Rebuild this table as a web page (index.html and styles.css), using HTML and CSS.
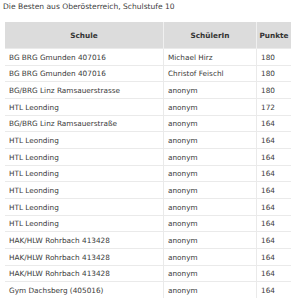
FILE: index.html
```html
<!DOCTYPE html>
<html lang="de">
<head>
<meta charset="utf-8">
<title>Die Besten</title>
<link rel="stylesheet" href="styles.css">
</head>
<body>
<p class="title">Die Besten aus Oberösterreich, Schulstufe 10</p>
<table class="ranking">
<thead>
<tr><th class="c-school">Schule</th><th class="c-name">SchülerIn</th><th class="c-pts">Punkte</th></tr>
</thead>
<tbody>
<tr><td>BG BRG Gmunden 407016</td><td>Michael Hirz</td><td>180</td></tr>
<tr><td>BG BRG Gmunden 407016</td><td>Christof Feischl</td><td>180</td></tr>
<tr><td>BG/BRG Linz Ramsauerstrasse</td><td>anonym</td><td>180</td></tr>
<tr><td>HTL Leonding</td><td>anonym</td><td>172</td></tr>
<tr><td>BG/BRG Linz Ramsauerstraße</td><td>anonym</td><td>164</td></tr>
<tr><td>HTL Leonding</td><td>anonym</td><td>164</td></tr>
<tr><td>HTL Leonding</td><td>anonym</td><td>164</td></tr>
<tr><td>HTL Leonding</td><td>anonym</td><td>164</td></tr>
<tr><td>HTL Leonding</td><td>anonym</td><td>164</td></tr>
<tr><td>HTL Leonding</td><td>anonym</td><td>164</td></tr>
<tr><td>HTL Leonding</td><td>anonym</td><td>164</td></tr>
<tr><td>HAK/HLW Rohrbach 413428</td><td>anonym</td><td>164</td></tr>
<tr><td>HAK/HLW Rohrbach 413428</td><td>anonym</td><td>164</td></tr>
<tr><td>HAK/HLW Rohrbach 413428</td><td>anonym</td><td>164</td></tr>
<tr><td>Gym Dachsberg (405016)</td><td>anonym</td><td>164</td></tr>
</tbody>
</table>
</body>
</html>
```
FILE: styles.css
```css
html, body {
  margin: 0;
  background: #fff;
}
body {
  padding: 2px 0 0 3px;
  font-family: "DejaVu Sans", Verdana, sans-serif;
  font-size: 7.3px;
  color: #3a3a3a;
}
.title {
  margin: 0 0 11px 0;
  font-size: 7.55px;
  line-height: 9px;
}
.ranking {
  margin-left: 2px;
  width: 284px;
  border-collapse: collapse;
  table-layout: fixed;
}
.c-school { width: 158px; }
.c-name { width: 92px; }
.c-pts { width: 34px; }
.ranking th {
  height: 26px;
  padding: 0;
  background: #dcdcdc;
  font-weight: bold;
  text-align: center;
  border-left: 1px solid #f0f0f0;
  color: #333;
}
.ranking th:first-child { border-left: none; }
.ranking td {
  height: 14.67px;
  line-height: 9px;
  padding: 1px 0 0 4px;
  border-top: 1px solid #eaeaea;
  border-left: 1px solid #eaeaea;
  white-space: nowrap;
  overflow: hidden;
}
.ranking td:first-child { border-left: none; }
```
